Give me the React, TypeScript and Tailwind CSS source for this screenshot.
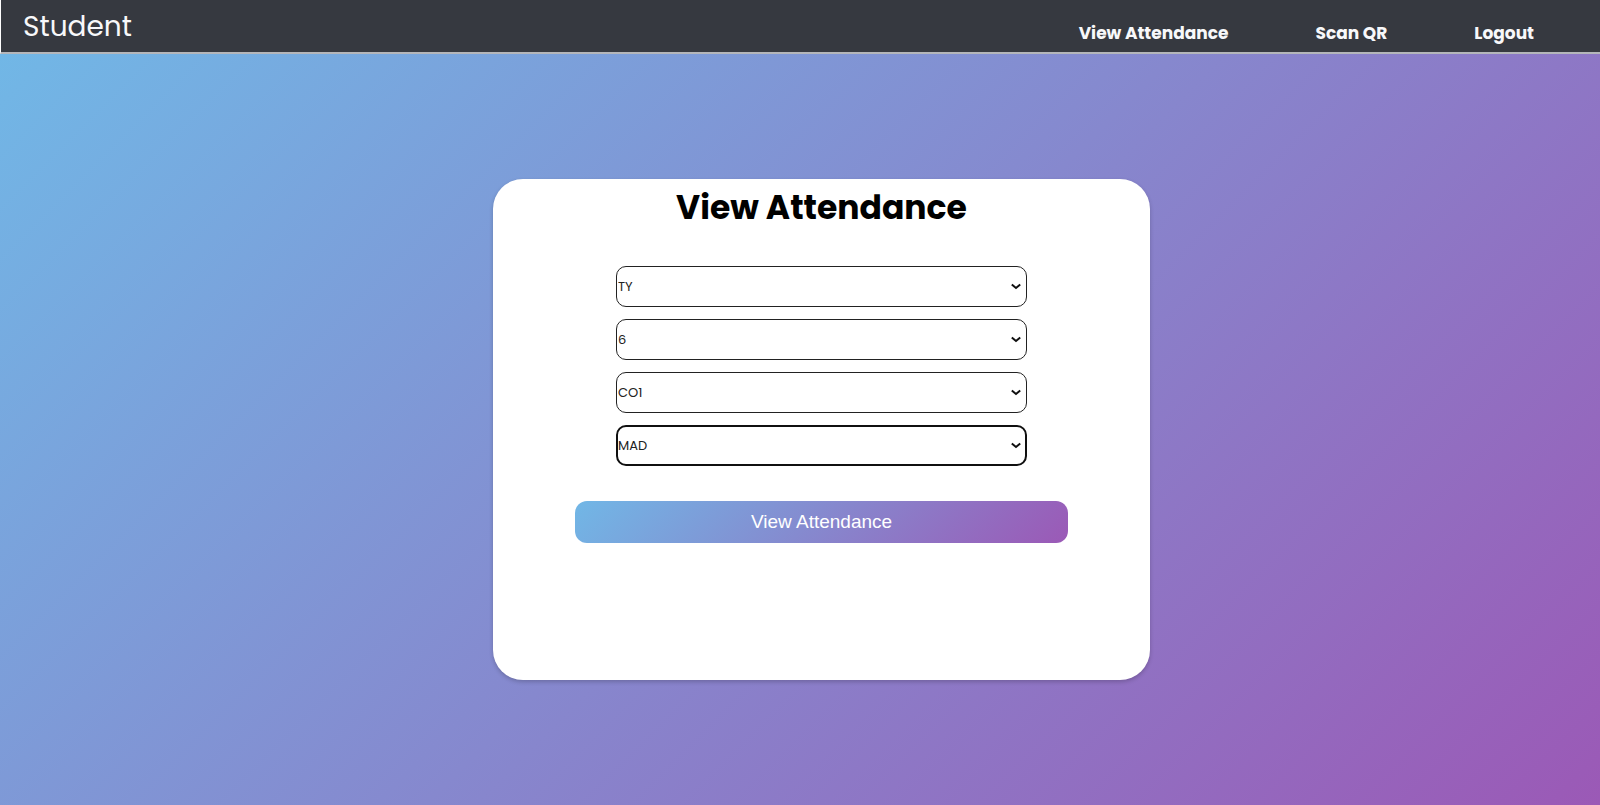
import { useState } from 'react';

const links = ['View Attendance', 'Scan QR', 'Logout'];

const fields = [
  { label: 'Year', options: ['FY', 'SY', 'TY'], initial: 'TY' },
  { label: 'Semester', options: ['1', '2', '3', '4', '5', '6'], initial: '6' },
  { label: 'Class', options: ['CO1', 'CO2'], initial: 'CO1' },
  { label: 'Subject', options: ['MAD', 'PWP', 'ETI'], initial: 'MAD', active: true },
];

type FieldProps = {
  label: string;
  options: string[];
  initial: string;
  active?: boolean;
};

function SelectField({ label, options, initial, active }: FieldProps) {
  const [value, setValue] = useState(initial);
  return (
    <div className="relative">
      <select
        aria-label={label}
        value={value}
        onChange={(e) => setValue(e.target.value)}
        className={
          active
            ? 'block h-[41px] w-full appearance-none rounded-[10px] border-2 border-[#101010] bg-white text-[13px] text-[#222]'
            : 'block h-[41px] w-full appearance-none rounded-[10px] border border-[#222] bg-white px-px text-[13px] text-[#222]'
        }
      >
        {options.map((o) => (
          <option key={o}>{o}</option>
        ))}
      </select>
      <svg
        className="pointer-events-none absolute top-[17px] right-[6px]"
        width="10"
        height="7"
        viewBox="0 0 10 7"
        fill="none"
        stroke="#101010"
        strokeWidth="2"
        aria-hidden="true"
      >
        <path d="M0.8 1.4 L5 5 L9.2 1.4" />
      </svg>
    </div>
  );
}

export default function App() {
  return (
    <div className="flex min-h-screen flex-col font-[Poppins,Inter,sans-serif]">
      <header className="flex h-[54px] items-start justify-between border-b-2 border-l border-b-[#b4b6ba] border-l-white bg-[#363940] pr-[66px] pl-[22px] text-[#f8f8fa]">
        <span className="pt-[6px] text-[28px] leading-[42px]">Student</span>
        <nav className="flex gap-[87px] pt-[21px] text-[17px] leading-6 font-bold">
          {links.map((l) => (
            <a key={l} href="#">
              {l}
            </a>
          ))}
        </nav>
      </header>
      <main className="flex flex-1 items-center justify-center bg-linear-[135deg,#71b7e6,#9b59b6] pl-[43px]">
        <section className="flex min-h-[501px] w-full max-w-[657px] flex-col items-center rounded-[30px] bg-white shadow-[0_2px_4px_rgba(0,0,0,0.2)]">
          <h1 className="pt-[5px] text-[33px] leading-[48px] font-bold text-black">View Attendance</h1>
          <form className="flex w-3/4 flex-col items-center pt-[34px]" onSubmit={(e) => e.preventDefault()}>
            <div className="flex w-[411px] max-w-full flex-col gap-3">
              {fields.map((f) => (
                <SelectField key={f.label} {...f} />
              ))}
            </div>
            <button
              type="submit"
              className="mt-[35px] h-[42px] w-full rounded-[12px] bg-linear-[135deg,#71b7e6,#9b59b6] font-['Liberation_Sans',Arial,sans-serif] text-[19px] text-white"
            >
              View Attendance
            </button>
          </form>
        </section>
      </main>
    </div>
  );
}
